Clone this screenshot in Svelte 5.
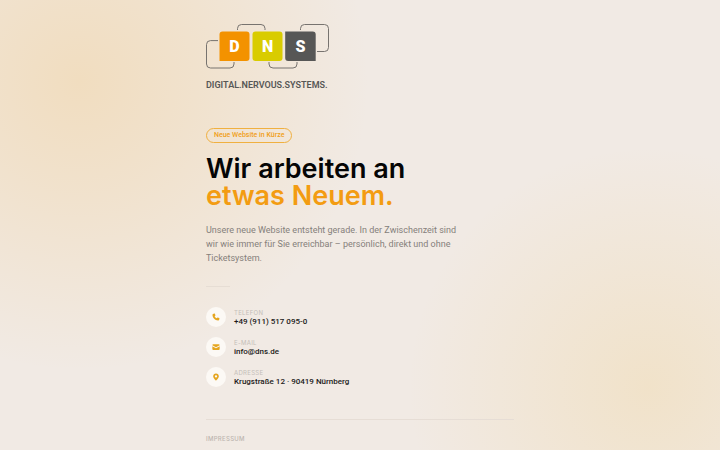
<script>
  const contacts = [
    { icon: 'phone', label: 'Telefon', value: '+49 (911) 517 095-0', href: 'tel:+499115170950' },
    { icon: 'mail', label: 'E-Mail', value: 'info@dns.de', href: 'mailto:info@dns.de' },
    { icon: 'pin', label: 'Adresse', value: 'Krugstraße 12 · 90419 Nürnberg' }
  ];
</script>

<div class="page">
  <div class="container">
    <header class="logo">
      <svg viewBox="0 0 124 66" role="img" aria-label="DNS Digital Nervous Systems">
        <g class="wires">
          <path d="M12 16.6H4.500a4 4 0 0 0-4 4V40a4 4 0 0 0 4 4H24a4 4 0 0 0 4-4v-2" />
          <path d="M31.500 6V4.500a4 4 0 0 1 4-4H55a4 4 0 0 1 4 4V6" />
          <path d="M63 38v2a4 4 0 0 0 4 4h20a4 4 0 0 0 4-4v-2" />
          <path d="M94.500 6V4.500a4 4 0 0 1 4-4h20a4 4 0 0 1 4 4v19a4 4 0 0 1-4 4H111" />
        </g>
        <path fill="#f39200" d="M16.500 7.500h24a3 3 0 0 1 3 3v23.500a3 3 0 0 1-3 3H13.500V10.500a3 3 0 0 1 3-3z" />
        <rect fill="#d9cc00" x="46.500" y="7.500" width="30" height="29.500" rx="3" />
        <path fill="#575756" d="M79.200 7.500h27.500a3 3 0 0 1 3 3V37H82.200a3 3 0 0 1-3-3z" />
        <g class="letters">
          <text x="28.500" y="28">D</text>
          <text x="61.500" y="28">N</text>
          <text x="94.500" y="28">S</text>
        </g>
        <text class="claim" x="0" y="64">DIGITAL.NERVOUS.SYSTEMS.</text>
      </svg>
    </header>

    <main>
      <span class="badge">Neue Website in Kürze</span>
      <h1>Wir arbeiten an<br /><span>etwas Neuem.</span></h1>
      <p class="intro">
        Unsere neue Website entsteht gerade. In der Zwischenzeit sind wir wie immer für Sie
        erreichbar – persönlich, direkt und ohne Ticketsystem.
      </p>

      <div class="divider"></div>

      <ul class="contacts">
        {#each contacts as contact}
          <li>
            <span class="icon">
              <svg viewBox="0 0 24 24" aria-hidden="true">
                {#if contact.icon === 'phone'}
                  <path d="M4.500 2 8.500 1.500l2 6-2.600 2.500c1.200 2.600 3.200 4.600 5.900 5.900l2.500-2.600 6 2-.5 4c-.3 2-1.500 3-3.500 3C9.500 22.300 1.500 14.500 1.500 6c0-2 1-3.700 3-4z" />
                {:else if contact.icon === 'mail'}
                  <path d="M4 3.500h16a3 3 0 0 1 3 3L12 13 1 6.500a3 3 0 0 1 3-3z" />
                  <path d="M1 9.500 12 16l11-6.500V18a3 3 0 0 1-3 3H4a3 3 0 0 1-3-3z" />
                {:else}
                  <path fill-rule="evenodd" d="M12 1.500c-5 0-8.500 3.600-8.500 8.300C3.500 15.500 12 23 12 23s8.500-7.500 8.500-13.200c0-4.700-3.500-8.300-8.500-8.300zm0 5a3.500 3.500 0 1 1 0 7 3.500 3.500 0 0 1 0-7z" />
                {/if}
              </svg>
            </span>
            <div class="details">
              <span class="label">{contact.label}</span>
              {#if contact.href}
                <a class="value" href={contact.href}>{contact.value}</a>
              {:else}
                <span class="value">{contact.value}</span>
              {/if}
            </div>
          </li>
        {/each}
      </ul>
    </main>

    <footer>
      <a href="#impressum">Impressum</a>
    </footer>
  </div>
</div>

<style>
  :global(body) {
    margin: 0;
    background: #f1eae4;
  }

  .page {
    box-sizing: border-box;
    min-height: 100vh;
    padding: 24px 24px 5px;
    font-family: Inter, sans-serif;
    color: #111;
    background:
      radial-gradient(circle at 11% 18%, rgba(241, 178, 70, 0.23), rgba(241, 178, 70, 0.15) 110px, rgba(241, 178, 70, 0) 290px),
      radial-gradient(circle at 90% 86%, rgba(240, 190, 80, 0.18), rgba(240, 190, 80, 0) 240px);
  }

  .container {
    max-width: 308px;
    margin: 0 auto;
  }

  .logo {
    margin-bottom: 38px;
  }

  .logo svg {
    display: block;
    width: 124px;
    overflow: visible;
  }

  .wires path {
    fill: none;
    stroke: #77736f;
    stroke-width: 1;
  }

  .letters text {
    font: 900 16px Roboto, sans-serif;
    fill: #fff;
    text-anchor: middle;
  }

  .claim {
    font: 600 9px Roboto, sans-serif;
    fill: #575756;
  }

  .badge,
  .intro,
  .value {
    font-family: Roboto, sans-serif;
  }

  .badge {
    display: inline-block;
    padding: 0 7px;
    border: 1px solid #f0b040;
    border-radius: 8px;
    color: #f0a020;
    font-size: 7px;
    font-weight: 500;
    line-height: 13px;
    vertical-align: top;
  }

  h1 {
    margin: 7px 0 14px;
    font-size: 27px;
    font-weight: 600;
    line-height: 27px;
    color: #050505;
  }

  h1 span {
    color: #f39c12;
  }

  .intro {
    max-width: 260px;
    margin: 0;
    color: #85807b;
    font-size: 9px;
    line-height: 14px;
  }

  .divider {
    width: 24px;
    height: 1px;
    margin: 21px 0 20px;
    background: #e6ddd4;
  }

  .contacts {
    display: grid;
    gap: 10px;
    margin: 0;
    padding: 0;
    list-style: none;
  }

  .contacts li {
    display: flex;
    align-items: center;
    gap: 8px;
  }

  .icon {
    display: grid;
    place-items: center;
    width: 20px;
    height: 20px;
    border-radius: 50%;
    background: #fcf9f5;
  }

  .icon svg {
    width: 8px;
    height: 8px;
    fill: #e5a51e;
  }

  .details {
    display: flex;
    flex-direction: column;
  }

  .label {
    color: #c4beb8;
    font-size: 6px;
    line-height: 9px;
    letter-spacing: 0.05em;
    text-transform: uppercase;
  }

  .value {
    color: #1c1a19;
    font-size: 8px;
    font-weight: 500;
    line-height: 9px;
    text-decoration: none;
  }

  footer {
    margin-top: 32px;
    padding-top: 15px;
    border-top: 1px solid #e6ddd5;
    font-size: 6px;
    line-height: 8px;
  }

  footer a {
    color: #bdb6b0;
    font-weight: 500;
    letter-spacing: 0.05em;
    text-transform: uppercase;
    text-decoration: none;
  }
</style>
